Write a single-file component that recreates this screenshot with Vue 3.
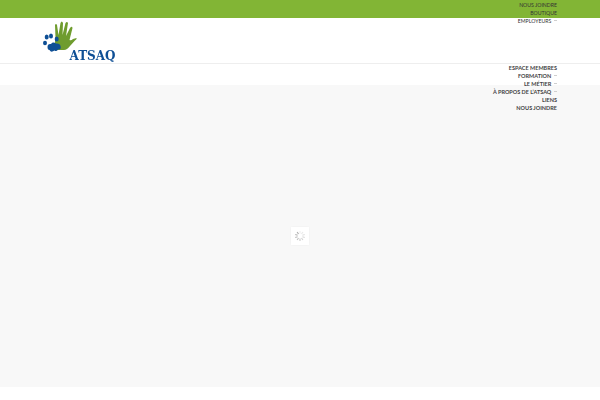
<script setup>
const topLinks = [
  { label: 'NOUS JOINDRE' },
  { label: 'BOUTIQUE' },
  { label: 'EMPLOYEURS', more: true }
]
const mainLinks = [
  { label: 'ESPACE MEMBRES' },
  { label: 'FORMATION', more: true },
  { label: 'LE MÉTIER', more: true },
  { label: 'À PROPOS DE L’ATSAQ', more: true },
  { label: 'LIENS' },
  { label: 'NOUS JOINDRE' }
]
const spokes = Array.from({ length: 10 }, (_, i) => i)
</script>

<template>
  <div class="page">
    <header class="header">
      <div class="topbar">
        <ul class="menu top-menu">
          <li v-for="l in topLinks" :key="l.label">
            {{ l.label }}<i v-if="l.more" class="dash"></i>
          </li>
        </ul>
      </div>
      <div class="brand-row">
        <svg class="logo" width="76" height="44" viewBox="0 0 76 44">
          <path fill="#6f9c2e" d="M12 30 L13.500 18 L13 5 Q14 3 15 5 L16.500 15 L18.500 3 Q19.800 0 21 3 L20.500 15 L23.500 3 Q25 1 26 3 L24 16 L28 8 Q30 5.500 30.500 8 L27.500 20 Q29 21 31 19 L34.500 18 Q35 19 33 20.500 L28 26 Q25 30 22 30 Z" />
          <path fill="#0e4f95" d="M5.500 27 Q5.500 23.500 9 24 Q11 21.500 14 23.500 Q18 23 18.500 26 Q19.500 30 16 29.500 Q14.500 32 12.500 30.500 Q9 33 7.500 30 Q5.500 30 5.500 27 Z" />
          <ellipse fill="#0e4f95" cx="3" cy="23" rx="2" ry="2.300" />
          <ellipse fill="#0e4f95" cx="4.700" cy="17" rx="2" ry="2.600" />
          <ellipse fill="#0e4f95" cx="9" cy="16" rx="2" ry="2.600" />
          <ellipse fill="#0e4f95" cx="14.700" cy="19" rx="2" ry="2.600" />
          <text x="27.500" y="39.600" class="logo-text">ATSAQ</text>
        </svg>
      </div>
      <nav class="nav-row">
        <ul class="menu main-menu">
          <li v-for="l in mainLinks" :key="l.label">
            {{ l.label }}<i v-if="l.more" class="dash"></i>
          </li>
        </ul>
      </nav>
    </header>
    <main class="content">
      <div class="loader">
        <svg width="12" height="12" viewBox="0 0 12 12">
          <line v-for="i in spokes" :key="i" x1="6" y1="1" x2="6" y2="3.500"
            :stroke-opacity="0.1 + i * 0.05" :transform="`rotate(${i * 36} 6 6)`" />
        </svg>
      </div>
    </main>
  </div>
</template>

<style scoped>
.page {
  width: 600px;
  height: 400px;
  overflow: hidden;
  background: #fff;
  font-family: Lato, "Liberation Sans", sans-serif;
}
.header {
  position: relative;
  z-index: 1;
}
.topbar {
  height: 18px;
  background: #82b535;
}
.menu {
  list-style: none;
  margin: 0;
  padding: 0 43px 0 0;
  text-align: right;
}
.top-menu {
  padding-top: 0.500px;
  font-size: 5.200px;
  line-height: 8.200px;
  color: #333;
}
.main-menu {
  font-size: 5.530px;
  line-height: 8.100px;
  font-weight: 700;
  color: #444;
}
.dash {
  display: inline-block;
  width: 2.700px;
  height: 1px;
  margin-left: 3px;
  vertical-align: 2px;
  background: #cfcfcf;
}
.brand-row {
  height: 46px;
  padding-left: 42px;
  border-bottom: 1px solid #eeeeee;
  box-sizing: border-box;
}
.logo {
  display: block;
  padding-top: 2px;
  filter: blur(0.300px);
}
.logo-text {
  font-family: "DejaVu Serif", "Liberation Serif", serif;
  font-size: 12px;
  font-weight: 700;
  fill: #0e4f95;
}
.nav-row {
  height: 21px;
}
.content {
  height: 302px;
  background: #f8f8f8;
  display: flex;
  align-items: center;
  justify-content: center;
}
.loader {
  width: 18px;
  height: 18px;
  background: #fff;
  box-shadow: 0 0 2px rgba(0, 0, 0, 0.05);
  display: flex;
  align-items: center;
  justify-content: center;
}
.loader line {
  stroke: #666;
  stroke-width: 1.100;
}
</style>
